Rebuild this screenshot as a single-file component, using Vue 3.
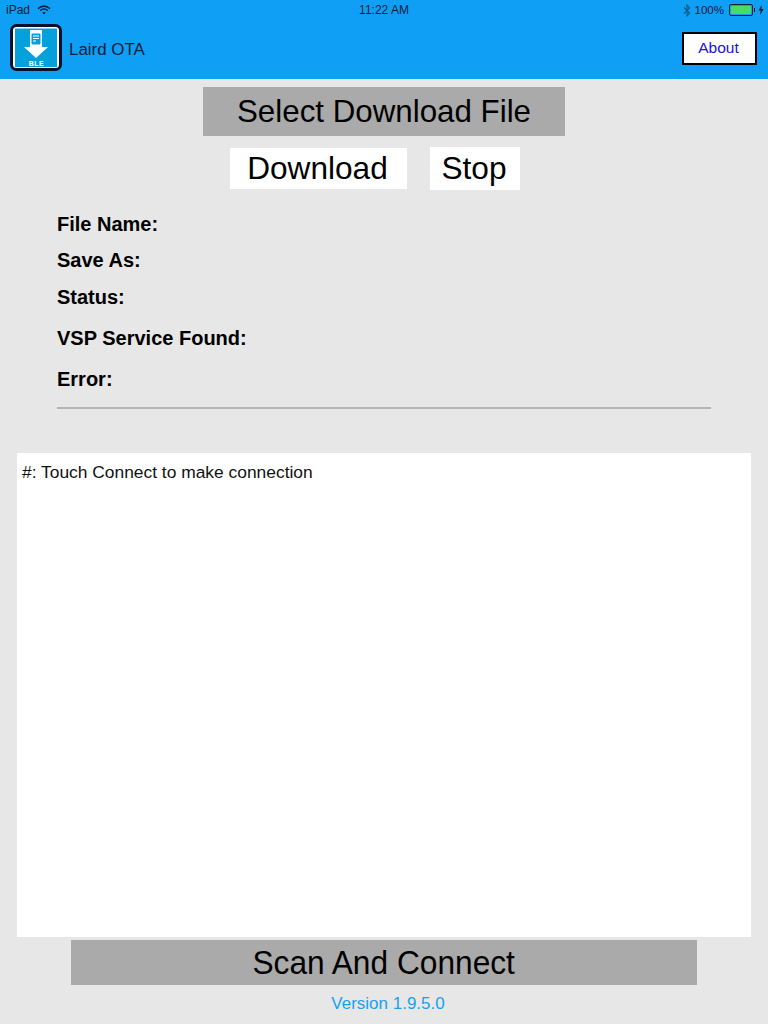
<script setup>
const fields = [
  { label: "File Name:", h: 36 },
  { label: "Save As:", h: 36 },
  { label: "Status:", h: 38 },
  { label: "VSP Service Found:", h: 44 },
  { label: "Error:", h: 38 },
];
</script>

<template>
  <div class="page">
    <header class="header">
      <div class="status-bar">
        <div class="status-left">
          <span>iPad</span>
          <svg class="wifi" width="14" height="10" viewBox="0 0 14 10">
            <path d="M1 3.6 Q7 -1.4 13 3.6" fill="none" stroke="#07203a" stroke-width="1.5" />
            <path d="M3.2 5.6 Q7 2.4 10.8 5.6" fill="none" stroke="#07203a" stroke-width="1.5" />
            <path d="M5.2 7.6 Q7 6.2 8.8 7.6 L7 9.6 Z" fill="#07203a" />
          </svg>
        </div>
        <div class="status-time">11:22 AM</div>
        <div class="status-right">
          <svg class="bt" width="8" height="13" viewBox="0 0 8 13">
            <path d="M1 3.5 L6.6 9 L4 11.8 V1.2 L6.6 4 L1 9.5" fill="none" stroke="#0b5f96" stroke-width="1.2" />
          </svg>
          <span class="pct">100%</span>
          <span class="battery"><span class="battery-fill"></span></span>
          <span class="battery-cap"></span>
          <svg width="6" height="10" viewBox="0 0 6 10">
            <path d="M3.8 0 L0.4 5.6 H2.6 L2 10 L5.6 4 H3.3 Z" fill="#07203a" />
          </svg>
        </div>
      </div>
      <div class="nav">
        <div class="logo">
          <svg width="52" height="47" viewBox="0 0 52 47">
            <rect x="1.5" y="1.5" width="49" height="44" rx="5" fill="#fff" stroke="#0a0f2e" stroke-width="3" />
            <rect x="5" y="4.5" width="42" height="38.5" fill="#04a0dc" />
            <rect x="20" y="6" width="12" height="17" fill="#fff" />
            <rect x="21.5" y="9.5" width="9" height="11" rx="1" fill="#04a0dc" />
            <rect x="23" y="11.5" width="6" height="1" fill="#fff" />
            <rect x="23" y="14" width="6" height="1" fill="#fff" />
            <rect x="23" y="16.5" width="3" height="1" fill="#fff" />
            <path d="M14 23 H38 L26 34 Z" fill="#fff" />
            <text x="26.5" y="42" class="ble">BLE</text>
          </svg>
        </div>
        <span class="title">Laird OTA</span>
        <button class="about">About</button>
      </div>
    </header>

    <main class="main">
      <button class="select-btn">Select Download File</button>
      <div class="actions">
        <button class="white-btn download">Download</button>
        <button class="white-btn stop">Stop</button>
      </div>

      <div class="fields">
        <div v-for="f in fields" :key="f.label" class="field" :style="{ height: f.h + 'px' }">
          {{ f.label }}
        </div>
      </div>
      <div class="divider"></div>

      <div class="log">#: Touch Connect to make connection</div>
      <button class="scan-btn"><span>Scan And Connect</span></button>
      <div class="version">Version 1.9.5.0</div>
    </main>
  </div>
</template>

<style>
html,
body {
  margin: 0;
  background: #e7e7e7;
}
</style>

<style scoped>
.page {
  width: 768px;
  height: 1024px;
  overflow: hidden;
  background: #e7e7e7;
  color: #000;
  font-family: "Liberation Sans", Arial, sans-serif;
  display: flex;
  flex-direction: column;
}
button {
  font-family: inherit;
  color: #000;
  border: 0;
  padding: 0;
  margin: 0;
}
.header {
  height: 79px;
  background: #0f9ff5;
  flex: none;
}
.status-bar {
  height: 20px;
  padding: 0 6px;
  position: relative;
  display: flex;
  align-items: center;
  justify-content: space-between;
  font-size: 12px;
  color: #07203a;
}
.status-left {
  display: flex;
  align-items: center;
  gap: 7px;
}
.status-time {
  position: absolute;
  left: 0;
  right: 0;
  text-align: center;
  font-size: 12px;
}
.status-right {
  display: flex;
  align-items: center;
  margin-right: -2px;
}
.bt {
  margin-right: 4px;
}
.pct {
  font-size: 11.5px;
  margin-right: 5px;
}
.battery {
  width: 20px;
  height: 8px;
  border: 1px solid #07203a;
  border-radius: 2px;
  padding: 1px;
  display: block;
}
.battery-fill {
  display: block;
  height: 100%;
  background: #4cd964;
  border-radius: 1px;
}
.battery-cap {
  width: 1px;
  height: 4px;
  background: #07203a;
  margin: 0 3px 0 1px;
}
.nav {
  height: 59px;
  display: flex;
  align-items: center;
  padding: 0 11px 0 10px;
}
.logo {
  width: 52px;
  height: 47px;
  margin-top: -4px;
}
.ble {
  font-size: 7px;
  font-weight: 700;
  letter-spacing: 0.5px;
  fill: #fff;
  text-anchor: middle;
}
.title {
  margin-left: 7px;
  font-size: 16.9px;
  color: #07203a;
}
.about {
  margin-left: auto;
  margin-top: -3px;
  width: 75px;
  height: 33px;
  background: #fff;
  border: 2px solid #000;
  color: #1a10e0;
  font-size: 15.5px;
  box-sizing: border-box;
  padding-right: 2px;
}
.main {
  display: flex;
  flex-direction: column;
  align-items: center;
  flex: 1;
  min-height: 0;
}
.select-btn {
  margin-top: 8px;
  width: 362px;
  height: 49px;
  background: #aaa;
  font-size: 31.3px;
}
.actions {
  margin-top: 11px;
  margin-right: 18px;
  height: 43px;
  display: flex;
  align-items: center;
  gap: 23px;
}
.white-btn {
  background: #fff;
  font-size: 31.6px;
  padding-right: 2px;
}
.download {
  width: 177px;
  height: 41px;
}
.stop {
  width: 90px;
  height: 43px;
}
.fields {
  align-self: stretch;
  margin-top: 16px;
  padding-left: 57px;
}
.field {
  font-size: 20px;
  font-weight: 700;
  display: flex;
  align-items: center;
}
.divider {
  margin-top: 9px;
  width: 654px;
  height: 2px;
  background: #b4b4b4;
}
.log {
  margin-top: 44px;
  width: 734px;
  height: 484px;
  box-sizing: border-box;
  background: #fff;
  padding: 10px 5px;
  font-size: 17.4px;
  line-height: 19px;
  color: #111;
}
.scan-btn {
  margin-top: 3px;
  width: 626px;
  height: 45px;
  background: #aaa;
  font-size: 33px;
}
.scan-btn span {
  display: inline-block;
  transform: scaleX(0.96);
}
.version {
  margin-top: 10px;
  margin-left: 8px;
  font-size: 17px;
  line-height: 18px;
  color: #1a9ff0;
}
</style>
